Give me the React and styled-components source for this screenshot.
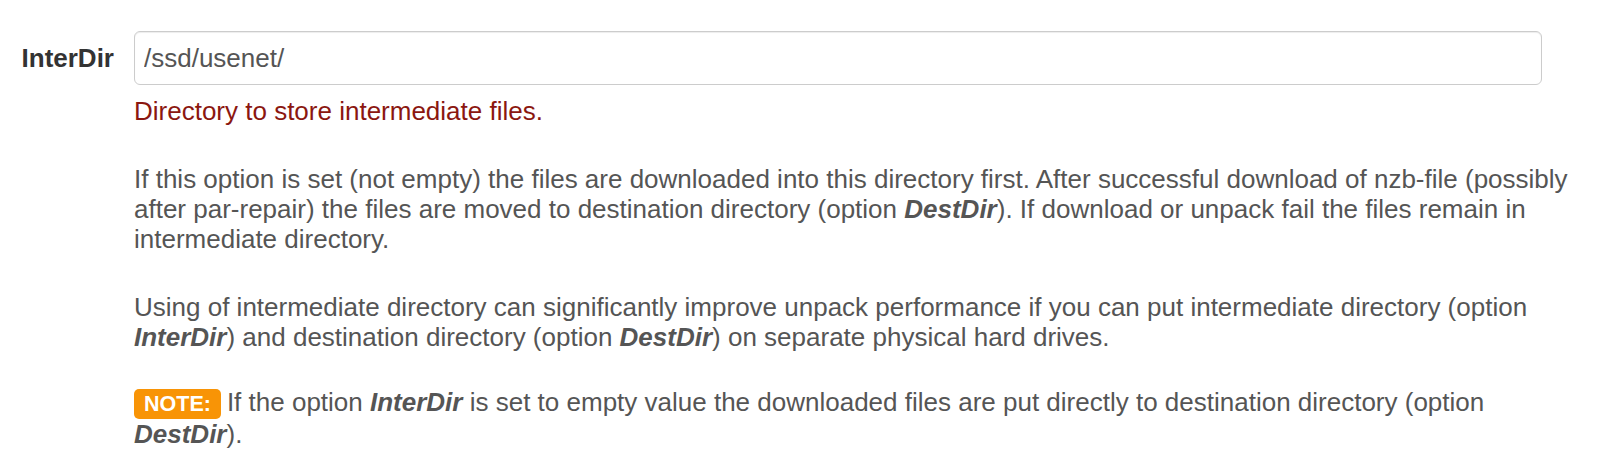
import styled, { createGlobalStyle } from 'styled-components'

const GlobalStyle = createGlobalStyle`
	body {
		margin: 0;
		background: #fff;
		font-family: "Liberation Sans", Arial, sans-serif;
		font-size: 26px;
		line-height: 30px;
		color: #555;
	}
`;

const OptionRow = styled.div`
	display: flex;
	align-items: flex-start;
	gap: 20px;
	padding-top: 31px;
`;

const OptionLabel = styled.label`
	width: 114px;
	height: 54px;
	line-height: 54px;
	text-align: right;
	font-weight: bold;
	color: #333;
	flex-shrink: 0;
`;

const Controls = styled.div`
	width: 1440px;
	display: flex;
	flex-direction: column;
`;

const TextInput = styled.input`
	box-sizing: border-box;
	width: 1408px;
	height: 54px;
	padding: 0 9px;
	border: 1px solid #ccc;
	border-radius: 6px;
	box-shadow: inset 0 1px 1px rgba(0, 0, 0, 0.075);
	font-family: inherit;
	font-size: 26px;
	color: #555;
	background: #fff;
	outline: none;
`;

const Summary = styled.p`
	margin: 11px 0 0;
	color: #8b1710;
`;

const HelpPara = styled.p`
	margin: ${p => p.$gap || 38}px 0 0;
`;

const OptName = styled.b`
	font-style: italic;
`;

const NoteBadge = styled.span`
	display: inline-block;
	padding: 4px 10px;
	margin-right: 6px;
	border-radius: 5px;
	background: #f89406;
	color: #fff;
	font-size: 21.5px;
	line-height: 22px;
	font-weight: bold;
	text-transform: uppercase;
`;

const App = () => {
	return (
		<>
			<GlobalStyle />
			<OptionRow>
				<OptionLabel>InterDir</OptionLabel>
				<Controls>
					<TextInput type="text" defaultValue="/ssd/usenet/" />
					<Summary>Directory to store intermediate files.</Summary>
					<HelpPara>
						If this option is set (not empty) the files are downloaded into this directory first. After successful download of nzb-file (possibly after par-repair) the files are moved to destination directory (option <OptName>DestDir</OptName>). If download or unpack fail the files remain in intermediate directory.
					</HelpPara>
					<HelpPara>
						Using of intermediate directory can significantly improve unpack performance if you can put intermediate directory (option <OptName>InterDir</OptName>) and destination directory (option <OptName>DestDir</OptName>) on separate physical hard drives.
					</HelpPara>
					<HelpPara $gap={35}>
						<NoteBadge>Note:</NoteBadge>If the option <OptName>InterDir</OptName> is set to empty value the downloaded files are put directly to destination directory (option <OptName>DestDir</OptName>).
					</HelpPara>
				</Controls>
			</OptionRow>
		</>
	)
}

export default App
